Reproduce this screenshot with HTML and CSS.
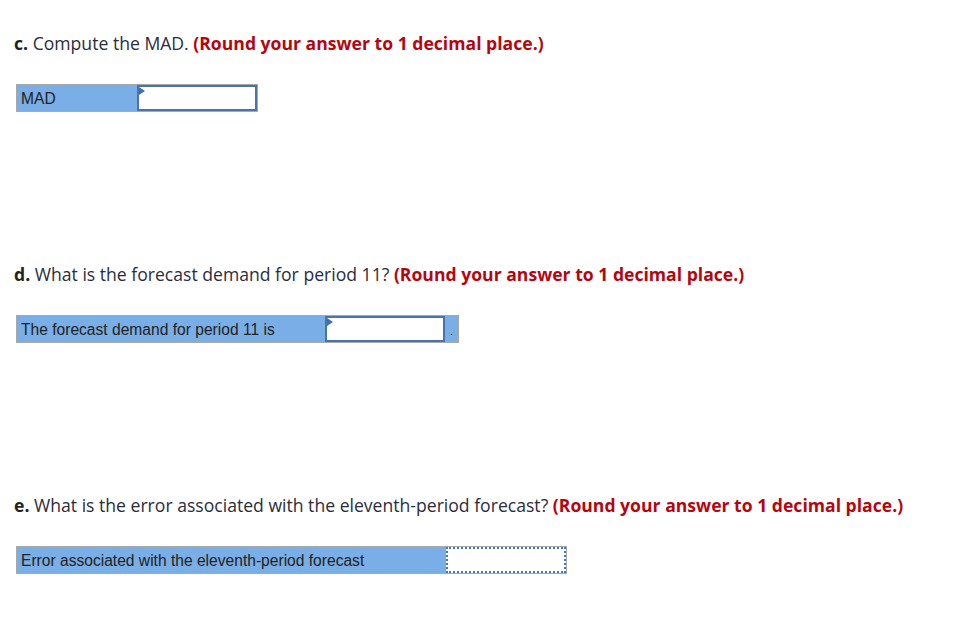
FILE: index.html
```html
<!DOCTYPE html>
<html>
<head>
<meta charset="utf-8">
<link rel="stylesheet" href="styles.css">
</head>
<body>
<div class="page">
  <section class="part">
    <p class="q"><b>c.</b> Compute the MAD. <span class="hint">(Round your answer to 1 decimal place.)</span></p>
    <div class="row">
      <div class="label w-c">MAD</div>
      <div class="input"><span class="flag"></span></div>
    </div>
  </section>
  <section class="part">
    <p class="q"><b>d.</b> What is the forecast demand for period 11? <span class="hint">(Round your answer to 1 decimal place.)</span></p>
    <div class="row">
      <div class="label w-d">The forecast demand for period 11 is</div>
      <div class="input"><span class="flag"></span></div>
      <div class="tail">.</div>
    </div>
  </section>
  <section class="part last">
    <p class="q"><b>e.</b> What is the error associated with the eleventh-period forecast? <span class="hint">(Round your answer to 1 decimal place.)</span></p>
    <div class="row">
      <div class="label w-e">Error associated with the eleventh-period forecast</div>
      <div class="input dotted"></div>
    </div>
  </section>
</div>
</body>
</html>
```

FILE: styles.css
```css
html, body { margin: 0; padding: 0; background: #fff; }
.page { padding: 33px 0 0 14px; }
.part { height: 231px; }
.part.last { height: auto; }
.q {
  margin: 0;
  font-family: "Open Sans", Lato, sans-serif;
  font-size: 17.6px;
  line-height: 20px;
  color: #2a2d3c;
  white-space: nowrap;
}
.q b { font-weight: 700; color: #222; }
.hint { color: #b5060f; font-weight: 700; }
.row {
  display: flex;
  margin: 31px 0 0 2px;
  height: 28px;
  width: max-content;
  border: 1px solid #a8a8a8;
  box-sizing: border-box;
  background: #79aee6;
}
.label {
  font-family: "Liberation Sans", Arial, sans-serif;
  font-size: 15.6px;
  line-height: 28px;
  color: #222;
  padding-left: 4px;
  box-sizing: border-box;
  white-space: nowrap;
}
.w-c { width: 120px; }
.w-d { width: 308px; }
.w-e { width: 429px; }
.input {
  position: relative;
  width: 120px;
  height: 26px;
  box-sizing: border-box;
  background: #fff;
  border: 2px solid #4a72ad;
}
.input.dotted { border: 2px dotted #3a78d0; }
.flag {
  position: absolute;
  left: 0;
  top: 0;
  width: 0; height: 0;
  border-top: 4px solid transparent;
  border-bottom: 4px solid transparent;
  border-left: 6px solid #3d6fb8;
}
.tail {
  width: 13px;
  font-family: "Liberation Sans", Arial, sans-serif;
  font-size: 11px;
  line-height: 30px;
  color: #333;
  text-align: center;
}
```
